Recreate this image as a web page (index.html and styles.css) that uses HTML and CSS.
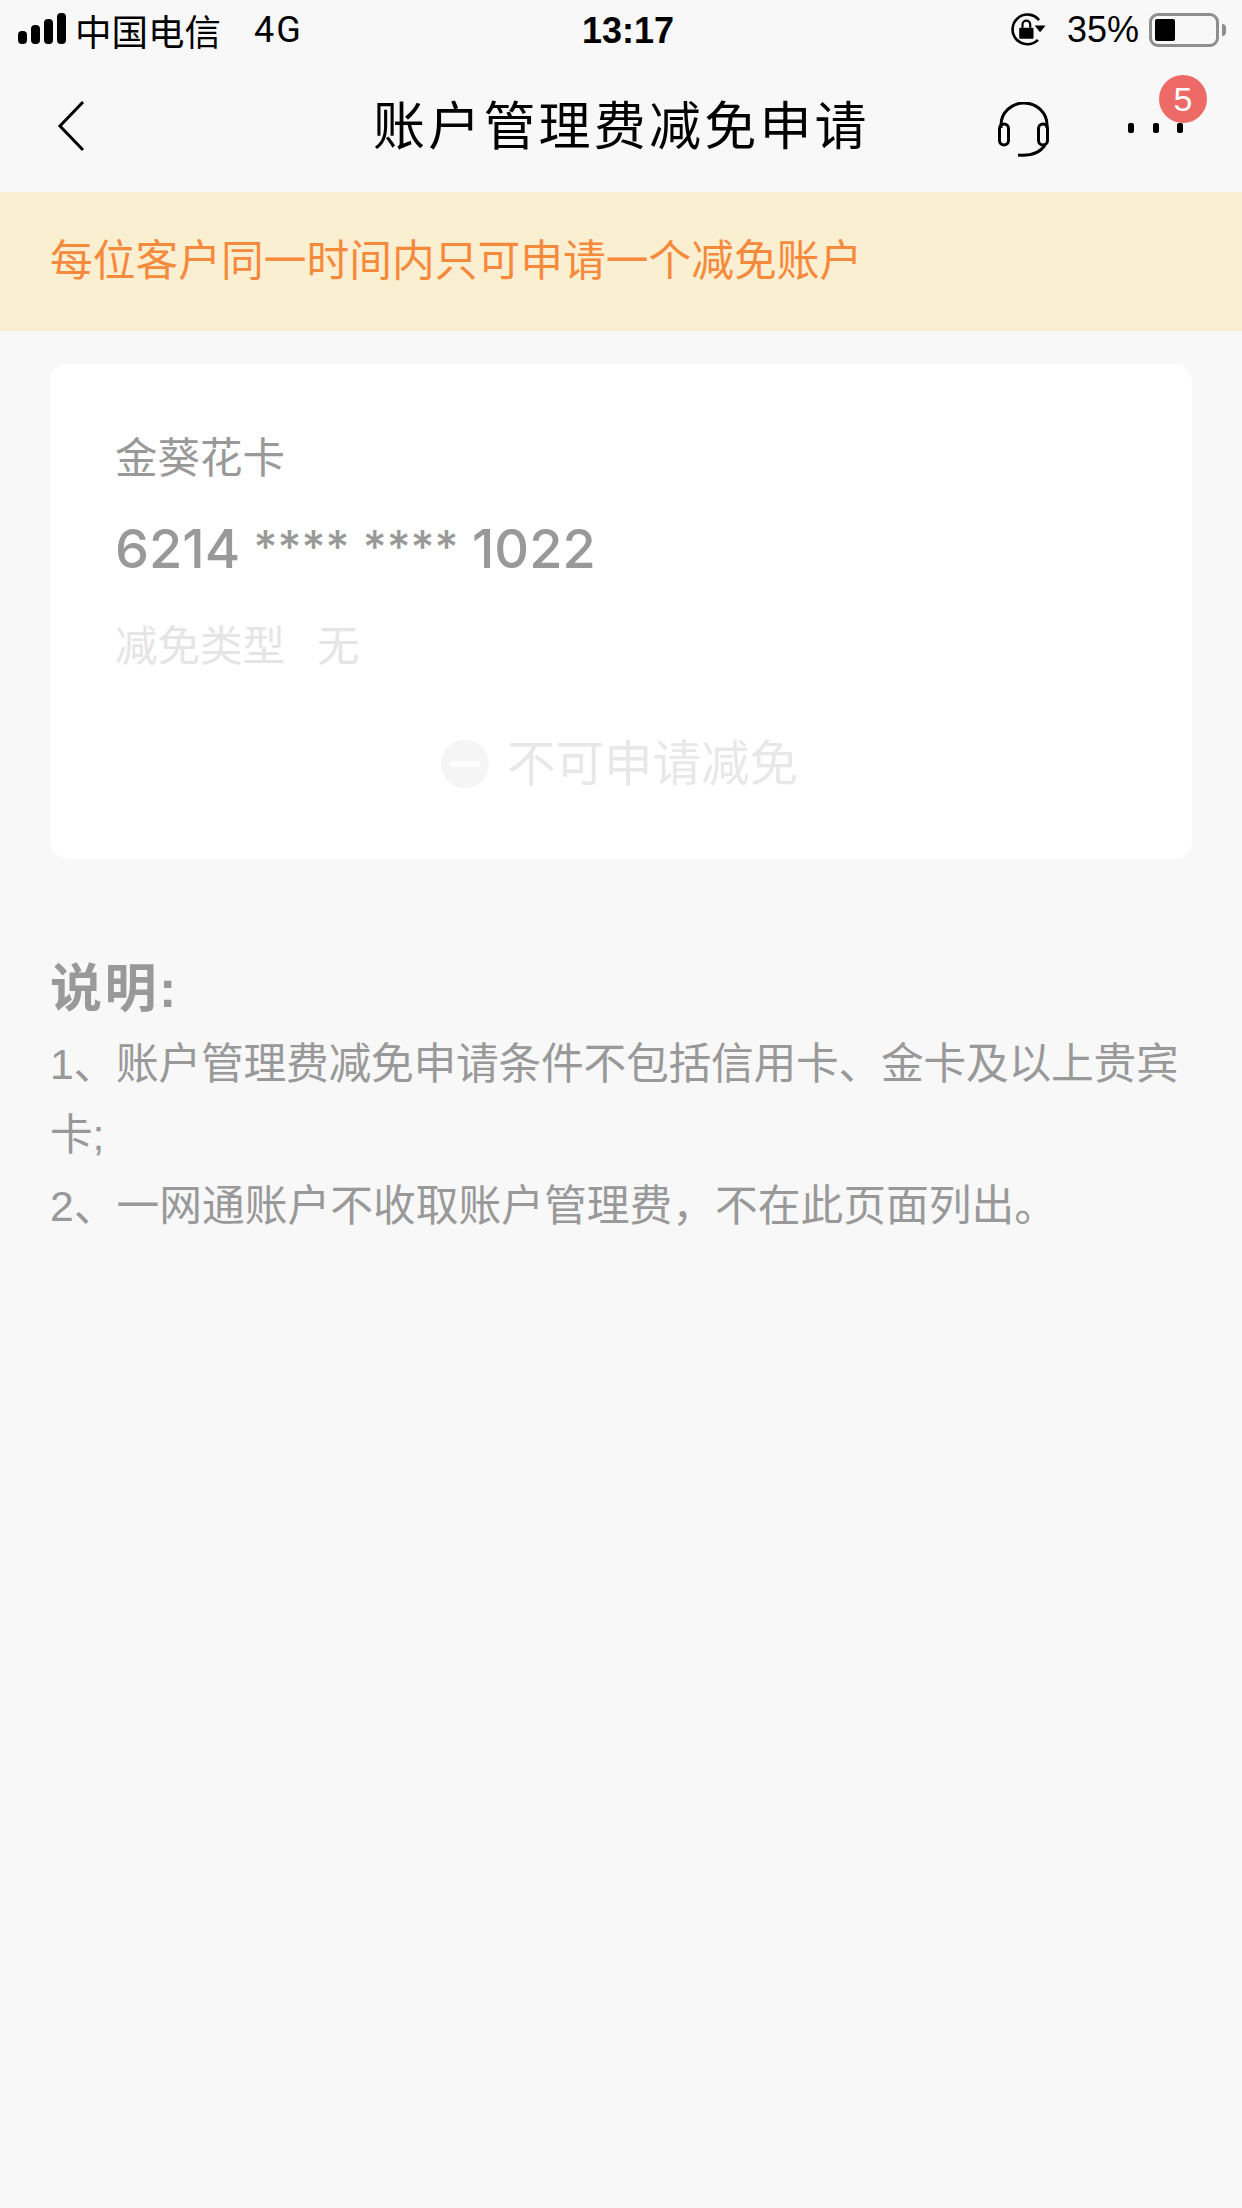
FILE: index.html
```html
<!DOCTYPE html>
<html lang="zh">
<head>
<meta charset="utf-8">
<title>账户管理费减免申请</title>
<link rel="stylesheet" href="styles.css">
</head>
<body>
<div class="status">
  <div class="status-left">
    <svg class="signal" width="50" height="32" viewBox="0 0 50 32"><rect x="0" y="18" width="9" height="13" rx="4"/><rect x="13" y="12" width="9" height="19" rx="4"/><rect x="26" y="6" width="9" height="25" rx="4"/><rect x="39" y="0" width="9" height="31" rx="4"/></svg>
    <span class="carrier">中国电信</span>
    <span class="net">4G</span>
  </div>
  <div class="time">13:17</div>
  <div class="status-right">
    <svg class="lock" width="32" height="32" viewBox="0 0 32 32"><path d="M26 7A13.500 13.500 0 1 0 25 25" fill="none" stroke="#000" stroke-width="2.400"/><path d="M22 12h10l-5 6z"/><rect x="8" y="14" width="13" height="10" rx="1"/><path d="M11 14v-3a3.500 3.500 0 0 1 7 0v3" fill="none" stroke="#000" stroke-width="2"/></svg>
    <span class="pct">35%</span>
    <div class="battery"><div class="battery-level"></div></div>
    <div class="battery-cap"></div>
  </div>
</div>
<header class="nav">
  <svg class="back" width="30" height="52" viewBox="0 0 30 52"><path d="M26 2L3 26l23 24" fill="none" stroke="#000" stroke-width="3"/></svg>
  <h1 class="title">账户管理费减免申请</h1>
  <svg class="headset" width="54" height="56" viewBox="0 0 54 56"><path d="M4 26V23a23 22 0 0 1 46 0v3" fill="none" stroke="#000" stroke-width="3"/><rect x="2.500" y="22" width="9" height="21" rx="4.500" fill="none" stroke="#000" stroke-width="3"/><rect x="41.500" y="22" width="9" height="21" rx="4.500" fill="none" stroke="#000" stroke-width="3"/><path d="M21 53c12 1 22-2 27-10" fill="none" stroke="#000" stroke-width="3"/></svg>
  <div class="more">
    <span class="dot"></span><span class="dot"></span><span class="dot"></span>
    <span class="badge">5</span>
  </div>
</header>
<div class="notice">每位客户同一时间内只可申请一个减免账户</div>
<section class="card">
  <div class="card-name">金葵花卡</div>
  <div class="card-no">6214 <span class="stars">****</span> <span class="stars">****</span> 1022</div>
  <div class="card-type"><span>减免类型</span><span>无</span></div>
  <div class="card-action">
    <span class="minus"></span>
    <span>不可申请减免</span>
  </div>
</section>
<section class="notes">
  <h2 class="notes-title">说明:</h2>
  <p class="note-first">1、账户管理费减免申请条件不包括信用卡、金卡及以上贵宾卡;</p>
  <p>2、一网通账户不收取账户管理费，不在此页面列出。</p>
</section>
</body>
</html>
```
FILE: styles.css
```css
* { box-sizing: border-box; }
html, body { margin: 0; padding: 0; }
body {
  width: 1242px;
  height: 2208px;
  background: #f8f8f8;
  color: #000;
  font-family: "Liberation Sans", "Noto Sans CJK SC", sans-serif;
  overflow: hidden;
}
.status {
  height: 60px;
  padding: 0 16px 0 18px;
  display: flex;
  align-items: center;
  position: relative;
  font-size: 36px;
}
.status-left { display: flex; align-items: center; flex: 1; }
.signal { margin-bottom: 2px; }
.carrier { margin-left: 7px; font-size: 36.500px; }
.net { margin-left: 33px; font-size: 36px; font-family: "Roboto", sans-serif; letter-spacing: 2px; }
.time {
  position: absolute;
  left: 582px;
  top: 8px;
  font-size: 36px;
  line-height: 46px;
  font-weight: 700;
}
.status-right { display: flex; align-items: center; }
.lock { margin-right: 23px; transform: scale(1.1); }
.pct { font-size: 36px; margin-right: 10px; }
.battery {
  width: 70px;
  height: 34px;
  border: 3px solid #8e8e8e;
  border-radius: 9px;
  padding: 3px;
}
.battery-level { height: 100%; width: 20px; background: #000; border-radius: 2px; }
.battery-cap { width: 4px; height: 12px; margin-left: 3px; background: #8e8e8e; border-radius: 0 4px 4px 0; }
.nav {
  height: 132px;
  display: flex;
  align-items: center;
  padding-left: 57px;
  position: relative;
}
.title {
  margin: 0;
  position: absolute;
  left: 373px;
  top: 36px;
  font-size: 52px;
  line-height: 62px;
  font-weight: 400;
  letter-spacing: 3.200px;
  white-space: nowrap;
}
.headset { position: absolute; left: 997px; top: 42px; }
.more { position: absolute; left: 1128px; top: 63px; display: flex; gap: 18.500px; }
.dot { width: 6px; height: 10px; background: #000; border-radius: 2px; }
.badge {
  position: absolute;
  left: 31px;
  top: -48px;
  width: 48px;
  height: 48px;
  border-radius: 50%;
  background: #ed6a67;
  color: #fff;
  font-size: 34px;
  line-height: 48px;
  text-align: center;
}
.notice {
  height: 139px;
  background: #fbefd2;
  color: #f68a3c;
  font-size: 42.750px;
  line-height: 139px;
  padding-left: 50px;
  white-space: nowrap;
}
.card {
  margin: 33px 50px 0;
  height: 495px;
  background: #fff;
  border-radius: 18px;
  padding: 65px 0 0 65px;
  display: flex;
  flex-direction: column;
}
.card-name { color: #999; font-size: 42.500px; line-height: 60px; }
.card-no { color: #999; font-family: "Inter", sans-serif; font-weight: 500; font-size: 54px; word-spacing: -1px; height: 60px; line-height: 60px; margin-top: 28px; }
.stars { font-size: 46px; vertical-align: 4px; }
.card-type {
  color: #e5e5e5;
  font-size: 42.500px;
  line-height: 60px;
  margin-top: 40px;
  display: flex;
  gap: 32px;
}
.card-action {
  margin-top: 57px;
  margin-left: 326px;
  display: flex;
  align-items: center;
  gap: 18px;
  color: #e8e8e8;
  font-size: 48.500px;
  line-height: 60px;
}
.minus {
  width: 48px;
  height: 48px;
  border-radius: 50%;
  background: #f5f5f5;
  display: flex;
  align-items: center;
  justify-content: center;
}
.minus::after { content: ""; width: 30px; height: 6px; background: #fff; border-radius: 3px; }
.notes { padding: 98px 50px 0; color: #999; font-size: 42.750px; line-height: 71px; }
.notes-title { margin: 0 0 8px; font-size: 52px; font-weight: 700; line-height: 64px; letter-spacing: 2.500px; }
.notes p { margin: 0; }
.notes .note-first { letter-spacing: -0.250px; }
```
